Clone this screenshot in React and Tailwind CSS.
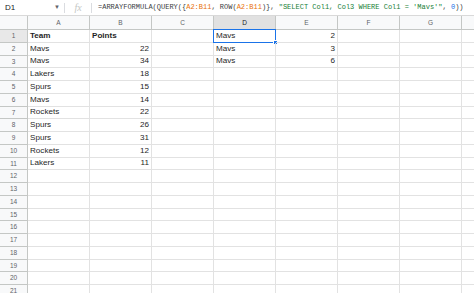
import React from 'react'

const cols = ['A', 'B', 'C', 'D', 'E', 'F', 'G', 'H']

const cells = {
  A: ['Team', 'Mavs', 'Mavs', 'Lakers', 'Spurs', 'Mavs', 'Rockets', 'Spurs', 'Spurs', 'Rockets', 'Lakers'],
  B: ['Points', '22', '34', '18', '15', '14', '22', '26', '31', '12', '11'],
  D: ['Mavs', 'Mavs', 'Mavs'],
  E: ['2', '3', '6'],
}

const rows = Array.from({ length: 22 }, (_, i) => i + 1)

function FormulaBar() {
  return (
    <div className='flex items-center h-[16px] border-b border-[#d9d9d9] bg-white text-[#202124]'>
      <div className='w-[64px] flex items-center justify-between pl-[5px] pr-[4px] h-full text-[8px]' style={{ fontFamily: '"Liberation Sans", Arial, sans-serif' }}>
        <span>D1</span>
        <span className='text-[6px] text-[#5f6368]'>▼</span>
      </div>
      <div className='w-px h-[10px] bg-[#dadce0]' />
      <div className='w-[26px] flex items-center justify-center text-[10px] italic text-[#c4c7c5]' style={{ fontFamily: '"Liberation Serif", serif' }}>
        fx
      </div>
      <div className='w-px h-[10px] bg-[#dadce0]' />
      <div className='pl-[6px] whitespace-nowrap text-[7px] text-[#3c4043]' style={{ fontFamily: '"Liberation Mono", monospace' }}>
        {'=ARRAYFORMULA(QUERY({'}
        <span className='text-[#e8710a]'>A2:B11</span>
        {', ROW('}
        <span className='text-[#e8710a]'>A2:B11</span>
        {')}, '}
        <span className='text-[#188038]'>{`"SELECT Col1, Col3 WHERE Col1 = 'Mavs'"`}</span>
        {', '}
        <span className='text-[#1a73e8]'>0</span>
        {'))'}
      </div>
    </div>
  )
}

function App() {
  return (
    <div className='w-[474px] h-[293px] overflow-hidden bg-white' style={{ fontFamily: '"Liberation Sans", Arial, sans-serif' }}>
      <FormulaBar />
      <div className='grid grid-cols-[28px_repeat(8,62px)]'>
        <div className='h-[14px] bg-[#f8f9fa] border-r border-b border-[#c4c7c5]' />
        {cols.map(c => (
          <div
            key={c}
            className={`h-[14px] flex items-center justify-center text-[6.5px] border-r border-b border-[#c4c7c5] ${c === 'D' ? 'bg-[#e1e1e1] text-[#202124]' : 'bg-[#f8f9fa] text-[#5f6368]'}`}
          >
            {c === 'H' ? '' : c}
          </div>
        ))}
        {rows.map(r => (
          <React.Fragment key={r}>
            <div className={`h-[12.75px] flex items-center justify-center text-[6.5px] text-[#5f6368] border-r border-b border-[#c4c7c5] ${r === 1 ? 'bg-[#e8e8e8]' : 'bg-[#f8f9fa]'}`}>
              {r}
            </div>
            {cols.map(c => {
              const v = cells[c] ? cells[c][r - 1] : undefined
              const numeric = v !== undefined && /^\d+$/.test(v)
              const selected = c === 'D' && r === 1
              return (
                <div
                  key={c}
                  className={`relative h-[12.75px] flex items-center px-[2px] text-[8.1px] text-[#1f1f1f] border-r border-b border-[#e2e2e2] whitespace-nowrap ${numeric ? 'justify-end' : 'justify-start'} ${r === 1 && (c === 'A' || c === 'B') ? 'font-bold' : ''}`}
                >
                  {v}
                  {selected && (
                    <>
                      <div className='absolute -left-px -top-px -right-px -bottom-px border-[1.5px] border-[#1a73e8]' />
                      <div className='absolute -right-[3px] -bottom-[3px] w-[5px] h-[5px] bg-[#1a73e8] border border-white' />
                    </>
                  )}
                </div>
              )
            })}
          </React.Fragment>
        ))}
      </div>
    </div>
  )
}

export default App
